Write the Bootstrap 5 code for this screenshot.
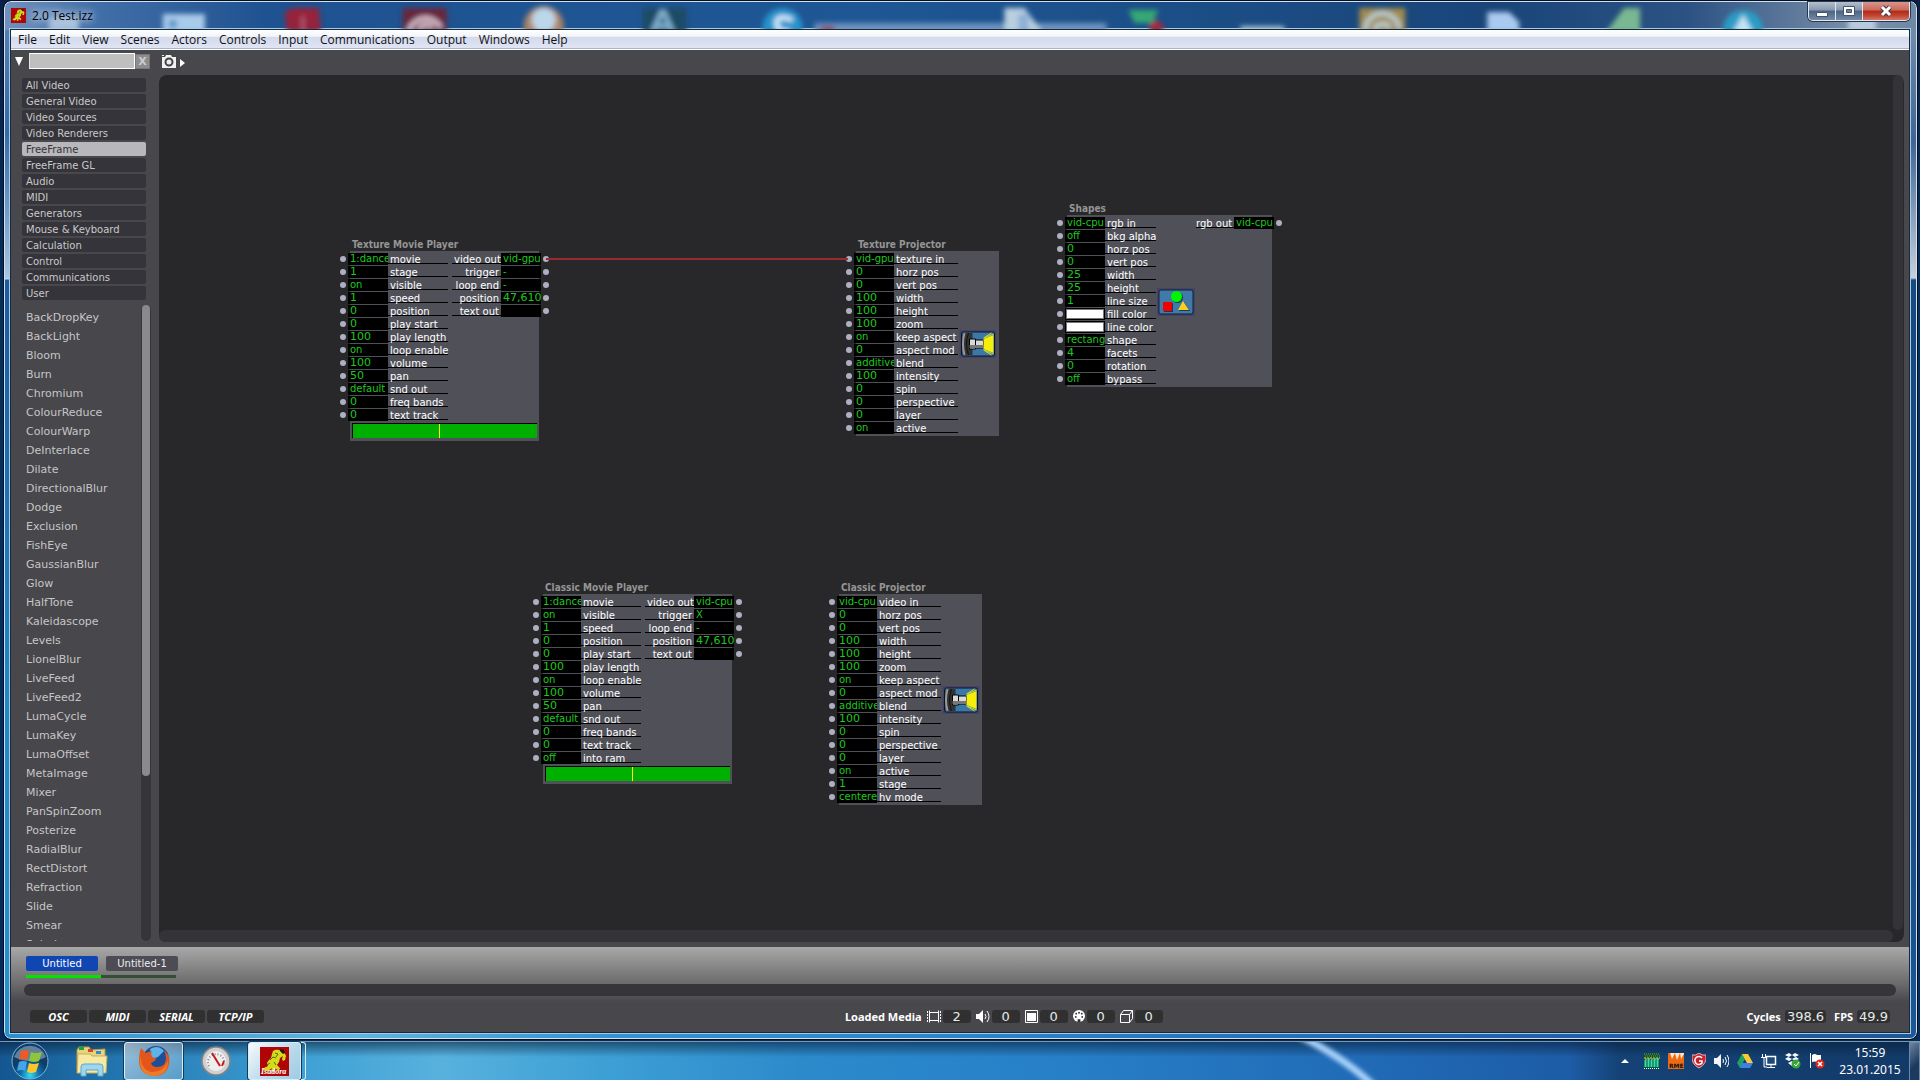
<!DOCTYPE html>
<html lang="en">
<head>
<meta charset="utf-8">
<meta name="viewport" content="width=device-width, initial-scale=1">
<title>2.0 Test.izz</title>
<link href="https://cdn.jsdelivr.net/npm/bootstrap@5.3.0/dist/css/bootstrap.min.css" rel="stylesheet">
<style>
:root{--ui:"DejaVu Sans",Verdana,sans-serif;--sys:"Open Sans","Noto Sans",sans-serif;--cond:"DejaVu Sans Condensed","Noto Sans",sans-serif;--panel:#48474c;--track:#36353a}
body{font-family:var(--ui);font-size:10px;line-height:12px;background:linear-gradient(#0a1f45,#04305e 30%,#052a5c);color:#ddd}
button,input{font:inherit;color:inherit;border:0;padding:0;margin:0;border-radius:0}
svg{display:block;flex:none}
/* window frame */
.win{margin:1px 3px 2px 4px;border:1px solid #cfe1f2;border-radius:7px;min-height:0;padding:0 6px 5px 5px;outline:1px solid #04101f;
 background:linear-gradient(90deg,#7191bd 0,#426fa8 90px,#1f5290 260px,#1e5794 45%,#194579 78%,#2b5283 88%,#7d90a9 97%,#6f88a5) top/100% 28px no-repeat,
 linear-gradient(#5c82b5,#346aa9 130px,#a9c4df 275px,#c3d6e8 277px,#1c5a9e 278px,#2287c5 700px,#2a90cc) left top/12px 100% no-repeat,
 linear-gradient(#7f95ae,#3f6596 140px,#c8d0da 276px,#174a80 278px,#174a80 70%,#1b5896) right top/12px 100% no-repeat,
 linear-gradient(90deg,#2a90cc,#5fb4e0 350px,#3493d0 600px,#2a82c9 1000px,#1f62ad 1500px,#1b5896)}
.titlebar{height:27px;flex-shrink:0}
.titlebar .caption{padding-left:1px;gap:6px}
.ghosts{left:0;top:0;width:100%;height:27px;border-radius:6px}
.title-text{font:12px/16px var(--sys);color:#000;text-shadow:0 0 6px #dbe8f8,0 0 10px #dbe8f8}
.wbtns{height:19px;border:1px solid #dfe7f0;border-top:0;border-radius:0 0 5px 5px;overflow:hidden;box-shadow:0 0 0 1px #26364d}
.wbtns button{width:27px;display:flex;align-items:center;justify-content:center;background:linear-gradient(#b4bfce,#8797ae 45%,#4d6485 50%,#7489a5);border-right:1px solid #dfe7f0}
.wbtns .x-btn{width:46px;border:0;background:linear-gradient(#d9968c,#c9695a 45%,#b02a18 50%,#c1452f 75%,#d0776a)}
.client{border:1px solid #17293d;outline:1px solid #a6cbe6;background:var(--panel);min-height:0}
.menubar{height:20px;flex-shrink:0;gap:12px;padding:0 7px;font:12px/16px var(--sys);background:linear-gradient(#fff 0,#f3f5fa 6px,#e6e9f1 7px,#d3daec 7px,#e0e5f4 18px,#a9b5c6 18px,#a9b5c6 19px,#fff 19px)}
.menubar a{color:#111;text-decoration:none}
/* toolbar */
.tools{height:25px;flex-shrink:0;padding:3px 4px 0}
.find{width:106px;height:16px;background:#bfbfc0;border:1px solid #fff;border-left-color:#e6e6e6;padding:0 3px;color:#111}
.clear{width:15px;height:15px;margin-top:1px;background:#8d8c8f;color:#ccc;font-weight:bold;font-size:11px;line-height:13px;border:1px solid #77767a}
/* sidebar */
.side{width:148px;padding:3px 0 6px 11px}
.cats{gap:2px;width:124px}
.cats button{height:14px;background:#35343a;color:#c9c9c9;text-align:left;padding:1px 4px 0;line-height:13px;border-radius:2px}
.cats .sel{background:#b8b7bc;color:#333}
.lib{margin-top:5px;min-height:0}
.lib ul{min-height:0;overflow:hidden;font-size:11px;line-height:19px;color:#c6c6c6;padding:3px 0 0 4px;margin:0}
.vbar{width:10px;background:var(--track);border-radius:5px;padding:0 1px}
.vbar i{display:block;height:74%;background:#8a898c;border-radius:4px}
/* canvas */
.stage{background:#28282a;border-radius:8px;margin:0 5px 5px 0;min-height:0}
.vtrack{width:10px;margin-right:1px;background:#343337;border-radius:5px}
.htrack{height:12px;margin-right:11px;background:#343338;border-radius:6px}
.node-title{height:14px;padding-left:2px;font:bold 10px/15px var(--cond);color:#959595;white-space:nowrap;margin:0}
.node-body{background:#505059;padding:2px 0 1px}
.ports{margin:0 -10px}
.port{height:13px;display:flex;align-items:flex-start}
.port b{width:6px;height:6px;border-radius:50%;background:#aeb0c2;margin:3px 2px 0 0}
.out b{margin:3px 0 0 2px}
.val{width:40px;height:12px;background:#000;color:#1fc71f;padding:0 0 0 2px;line-height:12px;overflow:hidden;white-space:nowrap;display:block}
.val.num{font-size:11px}
.swatch{border:1px solid #000;box-shadow:inset 0 0 0 1px #777;background:#fff}
.lbl{height:11px;line-height:13px;border-bottom:1px solid #000;color:#fff;padding:0 2px;white-space:nowrap;width:60px}
.out .lbl{width:49px;text-align:right}
.wide .lbl{width:64px}.slim .lbl{width:51px}.slim .out .lbl{width:38px;padding-left:0}
.meter-bar{height:15px;margin:1px 2px 2px;background:#00b000;border-top:1px solid #000;border-left:1px solid #000}
.meter-bar i{display:block;width:1px;height:14px;background:#ffff00;position:relative}
#n1{left:191px;top:162px;width:189px}#n2{left:697px;top:162px;width:143px}#n3{left:908px;top:126px;width:205px}
#n4{left:384px;top:505px;width:189px}#n5{left:680px;top:505px;width:143px}
.wire{left:387px;top:183px;width:302px;height:2px;background:#9a2b33}
/* scenes and status */
.scenes{height:55px;flex-shrink:0;padding:9px 13px 6px;background:linear-gradient(#a8a8a8,#6a6a6b 37px,#48474c)}
.scene-list{padding:0 2px}
.scenes button{width:72px;height:15px;line-height:15px;border-radius:2px;background:#4d4c55;color:#eee}
.scenes .on{background:#1046b4;color:#fff}
.prog{width:150px;height:3px;background:#354d33;margin:4px 2px 6px}
.prog i{display:block;width:50%;height:3px;background:#00e400}
.strack{height:12px;border-radius:6px;background:#36353a}
.status{height:30px;flex-shrink:0;padding:0 19px 2px;color:#fff}
.status button{width:57px;height:13px;border-radius:3px;background:#303031;font:italic bold 11px/13px var(--sys);color:#fff}
.toggles{gap:2px}
.stat-name{font:bold 11px/13px "Noto Sans",sans-serif}
.pill{background:#303031;border-radius:3px;height:13px;line-height:13px;font-size:13px;text-align:center;color:#e4eaea;padding:0 2px}
.cnt{width:28px}
.media{margin-right:3px}
.media svg{margin:0 2px 0 5px}
/* taskbar */
.task{height:39px;border-top:1px solid #7d97ad;background:linear-gradient(rgba(8,30,55,.6),rgba(8,30,55,0) 15px),linear-gradient(90deg,#15568f,#2276b0 120px,#3fa0d4 300px,#58b1dd 440px,#3da0d5 600px,#2c8acb 800px,#2780c8 1050px,#2068b4 1400px,#1d5ca6 1570px,#154276 1620px,#123a68);color:#fff}
.task button{background:none;display:flex;align-items:center;justify-content:center}
.task .orb{width:59px;height:38px}
.task .tb{width:65px;height:38px}
.task .run{width:59px;background:linear-gradient(135deg,rgba(255,255,255,.55),rgba(255,255,255,.2));border:1px solid #d6ecf7;border-radius:3px;box-shadow:0 0 0 1px #123a58}
.task .iz{width:53px;background:linear-gradient(135deg,#f6fafc,#b8d8ea 60%,#9fcbe4)}
.task .stack{width:5px;height:38px;border:1px solid #d6ecf7;border-left:0;border-radius:0 3px 3px 0}
.streak{left:1280px;top:0}
.tray{gap:8px;margin-right:6px}
.tray .more{margin-right:6px}
.clock{font:12px/17px "Noto Sans",sans-serif;width:78px;text-align:center}
.peek{width:11px;height:39px;border:1px solid #6f88a5;background:linear-gradient(135deg,#6d83a0,#1c3a60 60%)}
</style>
<script src="https://cdn.jsdelivr.net/npm/bootstrap@5.3.0/dist/js/bootstrap.bundle.min.js"></script>
</head>
<body class="vh-100 d-flex flex-column overflow-hidden">
<svg width="0" height="0" class="position-absolute" aria-hidden="true">
 <symbol id="isa" viewBox="0 0 29 29"><rect width="29" height="29" fill="#b00507"/><path d="M13 4q3-2 6-1l2 1 3 1 2 4-1 4-2 1-1-2 1-3-3 2-1 4-2 3 3 3-1 3-4-3-1 4-3-1 1-3-4 3-5-1 1-2 4-2-1-3 2-3 2-2 1-4z" fill="#d3dc1c"/><path d="M20 2l4 1 1 3-2 1-3-3z" fill="#301008"/><path d="M7 18l3-2M10 13l3-3 3 1M14 15l2 3M15 6l3 1-2 3" fill="none" stroke="#5b6a08"/></symbol>
 <symbol id="proj" viewBox="0 0 37 28"><rect width="37" height="28" fill="#42426a"/><rect x="2" y="2" width="33" height="24" rx="2" fill="#3a78a8" stroke="#10141c"/><path d="M3 3h10v22H3z" fill="#333"/><path d="M5 3q-3 11 0 22" fill="none" stroke="#999" stroke-width="2"/><path d="M9 3q-4 11 0 22" fill="none" stroke="#111"/><path d="M10 9h6v10h-6zM16 10h8v8h-8z" fill="#d8d8d8" stroke="#000"/><path d="M10 15h14v3H10z" fill="#777"/><path d="M24 9l10-4v18l-10-4z" fill="#f5ee0a"/><path d="M24 8l8-5M25 8l9-4M24 20l8 5M25 20l9 4" stroke="#d8dc2a"/></symbol>
 <symbol id="shp" viewBox="0 0 38 28"><rect width="38" height="28" fill="#42426a"/><rect x="2" y="2" width="34" height="24" rx="2" fill="#3f7aa8" stroke="#14202c"/><circle cx="20.500" cy="9.500" r="5.500" fill="#173a50"/><circle cx="19.500" cy="8.500" r="5.500" fill="#00f600"/><path d="M7 15h9v9H7z" fill="#173a50"/><path d="M6 14h9v9H6z" fill="#f40000"/><path d="M27 14l6 9H22z" fill="#173a50"/><path d="M26 13l6 9H21z" fill="#fccf20"/></symbol>
</svg>

<main class="win flex-grow-1 d-flex flex-column position-relative">
 <svg class="ghosts position-absolute" viewBox="4 2 1912 27" preserveAspectRatio="none" aria-hidden="true">
  <defs><filter id="bl" x="-20%" y="-50%" width="140%" height="200%"><feGaussianBlur stdDeviation="2.500"/></filter></defs>
  <g filter="url(#bl)">
   <path d="M48 18h30v14H48z" fill="#bcd0e6" opacity=".8"/><path d="M162 14h42v18h-42z" fill="#a9cbea"/><path d="M168 20h8v8h-8z" fill="#5d96cc"/>
   <path d="M284 12l8-4h26l2 24h-34z" fill="#96223a"/><path d="M302 16v16" stroke="#b0607a" stroke-width="3"/>
   <path d="M402 8h44v24h-44z" fill="#67283e"/><path d="M408 32a17 17 0 0 1 32-4M418 30a8 8 0 0 1 14-2" fill="none" stroke="#d2b7c4" stroke-width="5"/>
   <circle cx="543" cy="26" r="20" fill="#ab8468"/><circle cx="543" cy="20" r="12" fill="#bcd6ea"/>
   <path d="M642 8h44v24h-44z" fill="#1f4b66"/><path d="M662 10l-10 22M662 10l10 22M655 26h14" stroke="#7fb0cf" stroke-width="5" fill="none"/>
   <circle cx="782" cy="28" r="20" fill="#2593cc"/><path d="M792 20q-16-6-16 3t14 9" stroke="#d3eafa" stroke-width="5" fill="none"/>
   <path d="M814 23h292v9H814z" fill="#6c92bf"/><path d="M820 26h14v6h-14z" fill="#8d4660"/>
   <path d="M1004 8h20l18 24h-38z" fill="#b9cfe0"/><path d="M1018 14h10v18h-10z" fill="#8db0d6"/>
   <path d="M1128 10h30l-6 13h-18z" fill="#34a874"/><circle cx="1156" cy="28" r="7" fill="#a8283e"/>
   <path d="M1240 26h44v6h-44z" fill="#9fc3cf"/>
   <path d="M1359 8h46v24h-46z" fill="#a08a4d"/><path d="M1365 32a17 17 0 0 1 34-3M1374 30a9 9 0 0 1 16-2" fill="none" stroke="#b8ccd2" stroke-width="5"/>
   <path d="M1487 12h22l10 10v10h-32z" fill="#a9c9f0"/><path d="M1624 8h16v24h-34z" fill="#79b892"/>
   <circle cx="1743" cy="30" r="20" fill="#2a9cc6"/><path d="M1743 14l10 18h-20z" fill="#c3e4f5"/><path d="M1848 14h28v18h-28z" fill="#b9c9de"/>
  </g>
 </svg>
 <header class="titlebar d-flex position-relative">
  <div class="caption d-flex align-items-center flex-grow-1">
   <svg width="15" height="15"><use href="#isa"/></svg><span class="title-text">2.0 Test.izz</span>
  </div>
  <div class="wbtns d-flex">
   <button aria-label="Minimize"><svg width="12" height="12"><path d="M.5 7.500h11v4H.5z" fill="#fff" stroke="#44546b"/></svg></button>
   <button aria-label="Maximize"><svg width="12" height="12"><path d="M.5 1.500h11v9H.5z" fill="#fff" stroke="#44546b"/><path d="M3.500 4.500h5v3h-5z" fill="#71849f" stroke="#44546b"/></svg></button>
   <button class="x-btn" aria-label="Close"><svg width="13" height="12"><path d="M2 2l8 8M10 2l-8 8" stroke="#44384a" stroke-width="5"/><path d="M2 2l8 8M10 2l-8 8" stroke="#fff" stroke-width="3"/></svg></button>
  </div>
 </header>

 <div class="client flex-grow-1 d-flex flex-column">
  <nav class="menubar d-flex align-items-center">
   <a href="#">File</a><a href="#">Edit</a><a href="#">View</a><a href="#">Scenes</a><a href="#">Actors</a><a href="#">Controls</a><a href="#">Input</a><a href="#">Communications</a><a href="#">Output</a><a href="#">Windows</a><a href="#">Help</a>
  </nav>
  <div class="tools d-flex align-items-start">
   <svg width="14" height="16"><path d="M0 4h8L4 13z" fill="#fff"/></svg>
   <input class="find" type="text" aria-label="Search actors"><button class="clear" aria-label="Clear search">X</button>
   <svg class="ms-2" width="30" height="16"><path d="M4 4h3l1-2h5l1 2h4v11H4z" fill="#f2f2f2"/><path d="M4 2h2v1H4z" fill="#eee"/><circle cx="11" cy="9" r="3.500" fill="#eee" stroke="#444348" stroke-width="2"/><path d="M22 6l5 4-5 4z" fill="#fff"/></svg>
  </div>
  <div class="d-flex flex-grow-1 overflow-hidden">
   <aside class="side d-flex flex-column flex-shrink-0">
    <div class="cats d-flex flex-column">
     <button>All Video</button><button>General Video</button><button>Video Sources</button><button>Video Renderers</button><button class="sel">FreeFrame</button><button>FreeFrame GL</button><button>Audio</button><button>MIDI</button><button>Generators</button><button>Mouse &amp; Keyboard</button><button>Calculation</button><button>Control</button><button>Communications</button><button>User</button>
    </div>
    <div class="lib d-flex flex-grow-1">
     <ul class="list-unstyled flex-grow-1">
      <li>BackDropKey</li><li>BackLight</li><li>Bloom</li><li>Burn</li><li>Chromium</li><li>ColourReduce</li><li>ColourWarp</li><li>DeInterlace</li><li>Dilate</li><li>DirectionalBlur</li><li>Dodge</li><li>Exclusion</li><li>FishEye</li><li>GaussianBlur</li><li>Glow</li><li>HalfTone</li><li>Kaleidascope</li><li>Levels</li><li>LionelBlur</li><li>LiveFeed</li><li>LiveFeed2</li><li>LumaCycle</li><li>LumaKey</li><li>LumaOffset</li><li>MetaImage</li><li>Mixer</li><li>PanSpinZoom</li><li>Posterize</li><li>RadialBlur</li><li>RectDistort</li><li>Refraction</li><li>Slide</li><li>Smear</li><li>Solarize</li>
     </ul>
     <div class="vbar me-2 flex-shrink-0"><i></i></div>
    </div>
   </aside>
   <section class="stage flex-grow-1 position-relative d-flex flex-column" id="stage" aria-label="Scene editor">
    <div class="flex-grow-1 d-flex justify-content-end"><div class="vtrack"></div></div>
    <div class="htrack"></div>
   </section>
  </div>
  <section class="scenes">
   <div class="d-flex gap-2 scene-list"><button class="on">Untitled</button><button>Untitled-1</button></div>
   <div class="prog"><i></i></div>
   <div class="strack"></div>
  </section>
  <footer class="status d-flex align-items-center justify-content-between">
   <div class="d-flex toggles"><button>OSC</button><button>MIDI</button><button>SERIAL</button><button>TCP/IP</button></div>
   <div class="d-flex align-items-center media">
    <span class="stat-name">Loaded Media</span>
    <svg width="14" height="13"><path d="M.5 1v11M13.500 1v11" stroke="#fff" stroke-dasharray="2 1"/><path d="M2.500.5v12M11.500.5v12M2 2.500h10M2 10.500h10" stroke="#fff" fill="none"/></svg><span class="pill cnt">2</span>
    <svg width="14" height="13"><path d="M0 4h3l4-4v13l-4-4H0z" fill="#fff"/><path d="M9 4q2 2.500 0 5M11 1q4 5.500 0 11" stroke="#fff" fill="none"/></svg><span class="pill cnt">0</span>
    <svg width="13" height="13"><path d="M.5.5h12v12H.5z" fill="none" stroke="#fff"/><path d="M2 3h9v8H2z" fill="#fff"/></svg><span class="pill cnt">0</span>
    <svg width="12" height="12" viewBox="0 0 13 13"><circle cx="6.500" cy="6.500" r="6.500" fill="#fff"/><g fill="#303031"><circle cx="3.500" cy="4" r="1"/><circle cx="6.500" cy="3" r="1"/><circle cx="9.500" cy="4" r="1"/><circle cx="3" cy="7.500" r="1"/><circle cx="10" cy="7.500" r="1"/><path d="M5 13v-3h3v3z"/></g></svg><span class="pill cnt">0</span>
    <svg width="13" height="13"><path d="M.5 4.500h9v8h-9zM.5 4.500l3-4h9l-3 4M12.500.5v8l-3 4" stroke="#fff" fill="none"/></svg><span class="pill cnt">0</span>
   </div>
   <div class="d-flex align-items-center gap-1"><span class="stat-name">Cycles</span><span class="pill">398.6</span><span class="stat-name ps-1">FPS</span><span class="pill">49.9</span></div>
  </footer>
 </div>
</main>

<footer class="task d-flex align-items-center position-relative flex-shrink-0">
 <svg class="streak position-absolute" width="120" height="38" aria-hidden="true"><defs><filter id="b2"><feGaussianBlur stdDeviation="2"/></filter></defs><path d="M16-8Q66 16 98 48" stroke="#a8d2fb" stroke-width="7" fill="none" filter="url(#b2)"/></svg>
 <button class="orb" aria-label="Start"><svg width="38" height="38" viewBox="0 0 38 38"><defs><radialGradient id="og" cy=".9"><stop offset="0" stop-color="#2fe0ff"/><stop offset=".5" stop-color="#1272ac"/><stop offset="1" stop-color="#0f3d68"/></radialGradient></defs><circle cx="19" cy="19" r="18" fill="url(#og)" stroke="#7db6d8"/><path d="M3 15a17 17 0 0 1 32 0q-15 8-32 0z" fill="#fff" opacity=".35"/><path d="M10 9q4-2 8 0l-2 9q-4-2-8 0z" fill="#ee5a24"/><path d="M20 10q4 2 11 0l-3 9q-5 2-10 0z" fill="#8cc63c"/><path d="M8 20q4-2 8 0l-2 9q-4-2-8 0z" fill="#45a5e8"/><path d="M18 21q4 2 10 0l-3 9q-5 2-9 0z" fill="#fdc62c"/></svg></button>
 <button class="tb" aria-label="Explorer"><svg width="34" height="32" viewBox="0 0 34 32"><path d="M2 5l2-3h10l2 3 14-1v20H2z" fill="#e8d47c" stroke="#b89a42"/><path d="M4 2h5v3H4z" fill="#1aa33a"/><path d="M13 4h5v3h-5z" fill="#d8452a"/><path d="M21 6h5v3h-5z" fill="#2f8ad8"/><path d="M3 9h12l2 2h15l-1 17H2z" fill="#f6e9a4" stroke="#c9ad58"/><path d="M6 31v-9q0-3 3-3h16q3 0 3 3v9h-5v-6H11v6z" fill="#9fd6ef" stroke="#5ba7cf"/></svg></button>
 <button class="tb run" aria-label="Firefox"><svg width="32" height="32" viewBox="0 0 32 32"><circle cx="18" cy="14" r="13" fill="#1b4f98"/><path d="M12 4q8-5 14 2l-6 6-6 2z" fill="#5fb3e6"/><path d="M3 3l5 5q2-1 6-2-2 4 0 6l4 1q0 3-5 5 1 4 6 4 8 0 9-8 0-5-2-9 7 6 5 14-2 12-15 12Q2 30 1 17 1 8 3 3z" fill="#e2561c"/><path d="M3 10Q2 24 13 27q12 1 17-11 0 14-14 15Q2 30 2 16z" fill="#f6952c" opacity=".6"/></svg></button>
 <button class="tb" aria-label="Monitor"><svg width="32" height="32" viewBox="0 0 32 32"><circle cx="16" cy="16" r="14" fill="#d0d0d0" stroke="#858585" stroke-width="1.500"/><circle cx="16" cy="16" r="10" fill="#efefef"/><path d="M9 21a8 8 0 1 1 14 0" fill="none" stroke="#888" stroke-width="2" stroke-dasharray="1 2"/><path d="M12 8l8 13" stroke="#c41a1a" stroke-width="2"/><path d="M22 21l2-5" stroke="#c41a1a" stroke-width="2"/></svg></button>
 <button class="tb run iz" aria-label="Isadora"><svg width="29" height="29" viewBox="0 0 29 29"><use href="#isa" width="29" height="29"/><text x="1" y="27" font-family="Liberation Serif" font-style="italic" font-weight="bold" font-size="8" fill="#fff">Isadora</text></svg></button>
 <span class="stack"></span>
 <div class="ms-auto d-flex align-items-center tray">
  <svg class="more" width="10" height="16"><path d="M1 10l4-4 4 4z" fill="#fff"/></svg>
  <svg width="16" height="16"><path d="M0 0h16v16H0z" fill="#124c38"/><path d="M0 1h16M1 3h15" stroke="#5fa84a" stroke-dasharray="1 1"/><path d="M0 5h16M1 6h14" stroke="#d8e03a" stroke-dasharray="2 1"/><path d="M1.500 7v7M4.500 6v8M7.500 7v7M10.500 6v8M13.500 5v9" stroke="#2fe0b0" stroke-width="2"/><path d="M0 15.500h16" stroke="#fff" stroke-dasharray="1 1"/></svg>
  <svg width="16" height="16"><path d="M0 0h16v16H0z" fill="#f06a12"/><path d="M2 0l2 6 3-6 2 7 3-7 1 6 3-5V0z" fill="#fbe6d0"/><text x="1" y="15" font-family="DejaVu Sans" font-weight="bold" font-size="6" fill="#111">RME</text></svg>
  <svg width="14" height="16"><path d="M0 2q4 1 7-2 3 3 7 2 1 9-7 13-8-4-7-13z" fill="#c8202c" stroke="#e8b4b8"/><path d="M10 5a4 4 0 1 0 0 5V8H7" stroke="#fff" stroke-width="1.500" fill="none"/></svg>
  <svg width="15" height="16"><path d="M0 5h3l4-4v14l-4-4H0z" fill="#f4f4f4"/><path d="M9 6q1 2 0 4M11 4q3 4 0 8M13 2q4 6 0 12" stroke="#fff" fill="none"/></svg>
  <svg width="16" height="16"><path d="M5 1l3 5-5 9-3-5z" fill="#1da462"/><path d="M5 1h6l5 9h-6z" fill="#fbc92f"/><path d="M5 10h11l-3 5H3z" fill="#3f7fe8"/></svg>
  <svg width="16" height="16"><path d="M5.500 3.500h9v8h-9z" fill="#1b4a80" stroke="#fff" stroke-width="1.500"/><path d="M6 14.500h8M10 12v2M1.500 1v3M4.500 1v3M0 4.500h6M3 5v9h3" stroke="#fff" fill="none"/></svg>
  <svg width="16" height="16"><path d="M4 0l3 2-3 2-4-2zM10 0l4 2-4 2-3-2zM0 6l3-2 4 2-3 2zM7 6l4-2 3 2-4 2zM3 10l4-2 3 2-3 3z" fill="#fff"/><circle cx="11" cy="11" r="4.500" fill="#3aa53a"/><path d="M9 11l2 2 3-4" stroke="#fff" fill="none"/></svg>
  <svg width="16" height="16"><path d="M1.500 0v15" stroke="#fff"/><path d="M3 2q3-2 5 0h4v7H8Q6 8 3 9z" fill="#fff"/><circle cx="11" cy="11" r="4.500" fill="#d8281c"/><path d="M9 9l4 4M13 9l-4 4" stroke="#fff" stroke-width="1.500"/></svg>
 </div>
 <time class="clock d-block" datetime="2015-01-23T15:59">15:59<br>23.01.2015</time>
 <div class="peek"></div>
</footer>
<script>
const play=['speed|1','position|0','play start|0','play length|100','loop enable|on','volume|100','pan|50','snd out|default','freq bands|0','text track|0'];
const proj=['horz pos|0','vert pos|0','width|100','height|100','zoom|100','keep aspect|on','aspect mod|0','blend|additive','intensity|100','spin|0','perspective|0','layer|0','active|on'];
const nodes=[
 {id:'n1',t:'Texture Movie Player',i:['movie|1:dance','stage|1','visible|on',...play],o:['video out|vid-gpu','trigger|-','loop end|-','position|47,610','text out|'],bar:1},
 {id:'n2',t:'Texture Projector',c:'wide',i:['texture in|vid-gpu',...proj],icon:'proj'},
 {id:'n3',t:'Shapes',c:'slim',i:['rgb in|vid-cpu','bkg alpha|off','horz pos|0','vert pos|0','width|25','height|25','line size|1','fill color|#','line color|#','shape|rectang','facets|4','rotation|0','bypass|off'],o:['rgb out|vid-cpu'],icon:'shp'},
 {id:'n4',t:'Classic Movie Player',i:['movie|1:dance','visible|on',...play,'into ram|off'],o:['video out|vid-cpu','trigger|X','loop end|-','position|47,610','text out|'],bar:1},
 {id:'n5',t:'Classic Projector',c:'wide',i:['video in|vid-cpu',...proj,'stage|1','hv mode|centere'],icon:'proj'}];
const num=v=>/^[\d,]+$/.test(v)?' num':'';
const inp=(n,s,k)=>{const[l,v]=s.split('|'),id=n.id+'-'+k;
 return `<div class="port"><b></b><input type="text" id="${id}" class="val${v==='#'?' swatch':num(v)}" value="${v==='#'?'':v}"><label class="lbl" for="${id}">${l}</label></div>`};
const out=s=>{const[l,v]=s.split('|');return `<div class="port out"><span class="lbl">${l}</span><span class="val${num(v)}">${v}</span><b></b></div>`};
document.getElementById('stage').insertAdjacentHTML('beforeend',nodes.map(n=>`
<article class="position-absolute ${n.c||''}" id="${n.id}"><h2 class="node-title">${n.t}</h2><div class="node-body">
<div class="ports d-flex"><div>${n.i.map((s,k)=>inp(n,s,k)).join('')}</div>
${n.icon?`<svg class="align-self-center" width="40" height="28"><use href="#${n.icon}" x="1" width="38" height="28"/></svg>`:''}
<div class="ms-auto">${(n.o||[]).map(out).join('')}</div></div>
${n.bar?'<div class="meter-bar"><i style="left:47%"></i></div>':''}</div></article>`).join('')+'<div class="wire position-absolute"></div>');
</script>
</body>
</html>
